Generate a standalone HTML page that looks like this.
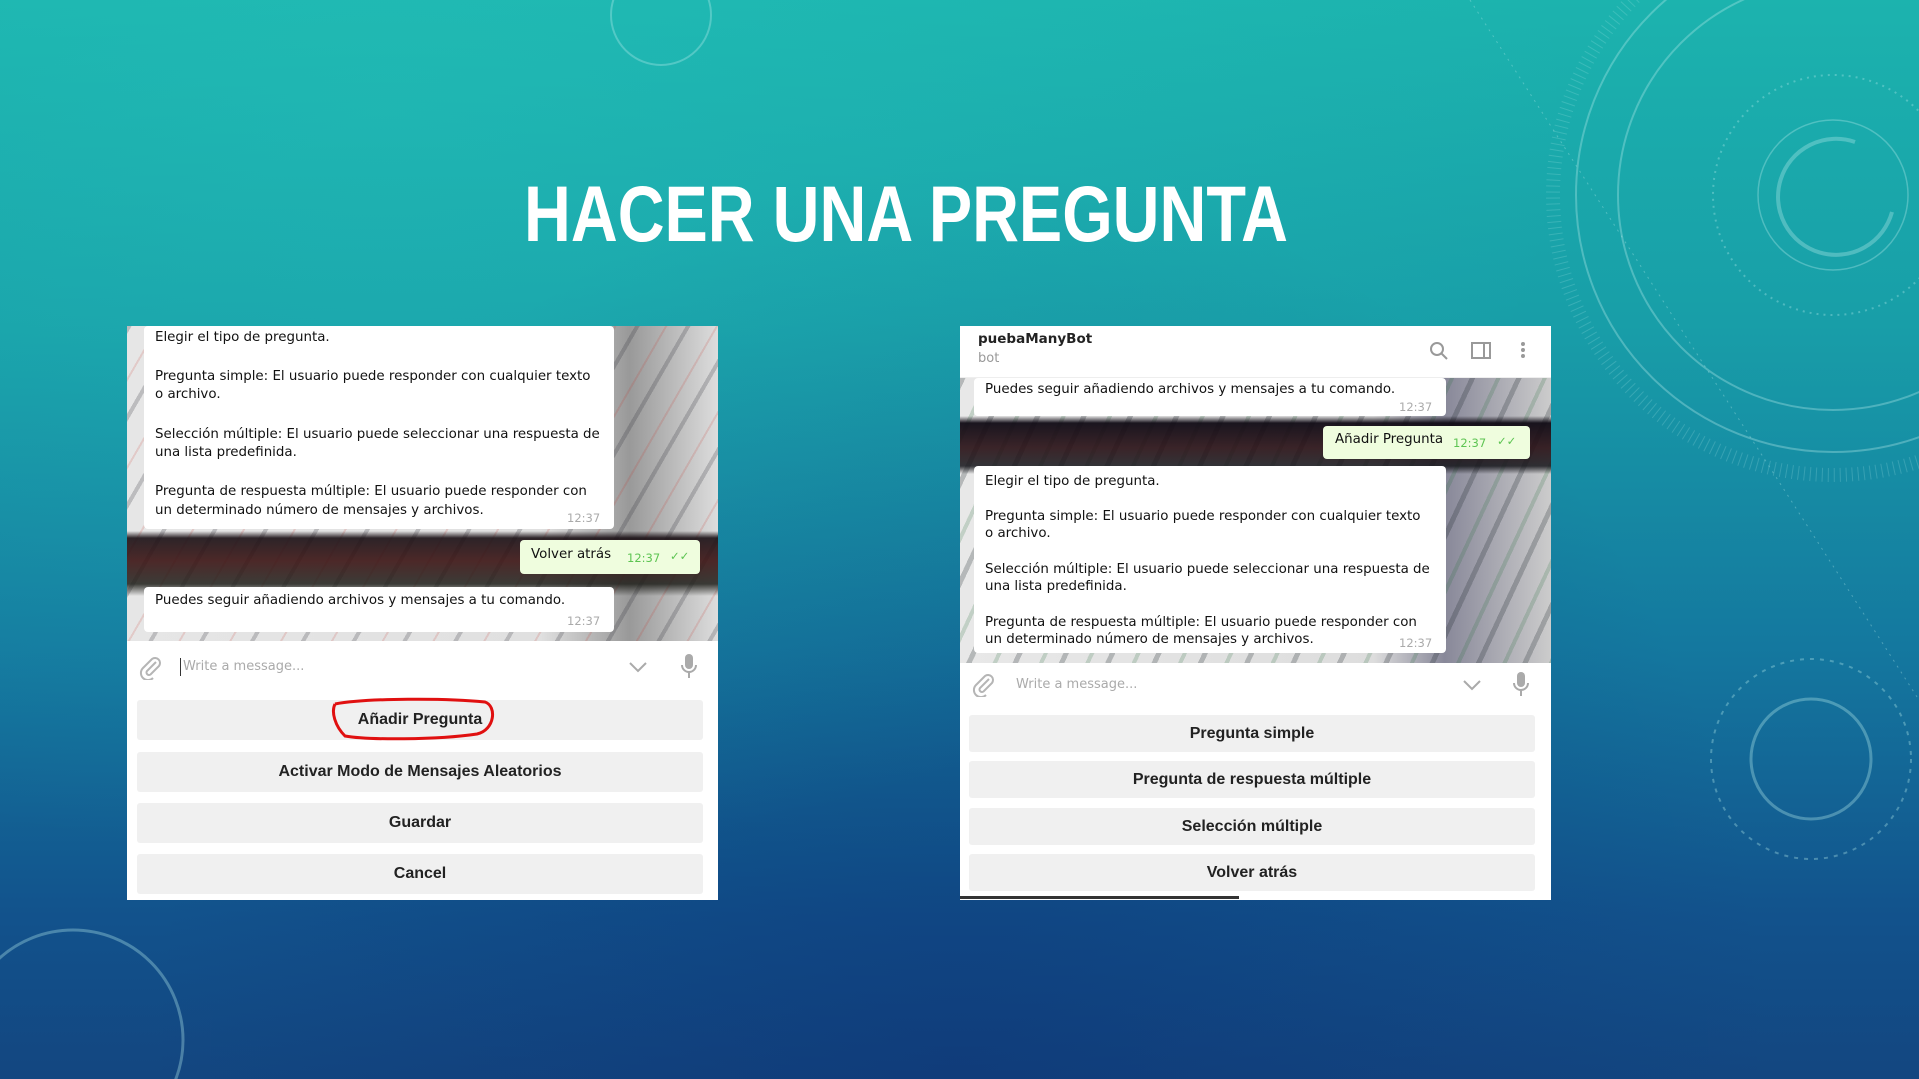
<!DOCTYPE html>
<html style="overflow:hidden"><head><meta charset="utf-8"><style>
*{margin:0;padding:0;box-sizing:border-box}
body{width:1919px;height:1079px;overflow:hidden;position:relative;font-family:"DejaVu Sans","Liberation Sans",sans-serif;
background:linear-gradient(180deg,#1cb3ae 0%,#189ea8 30%,#14789f 60%,#12528c 85%,#134680 100%);}
.bgov{position:absolute;inset:0;background:radial-gradient(ellipse at 20% 10%,rgba(40,200,190,.35),transparent 55%),radial-gradient(ellipse at 50% 100%,rgba(10,40,110,.35),transparent 60%)}
.panel{position:absolute;background:#fff;overflow:hidden}
.chat{position:absolute;left:0;right:0;overflow:hidden}
.bub{position:absolute;background:#fff;border-radius:4px;font-size:13.4px;color:#111;line-height:18px;}
.t{position:absolute;white-space:nowrap;font-size:13.4px;color:#111}
.tm{position:absolute;font-size:11.5px;color:#aaa;white-space:nowrap}
.sent{position:absolute;background:#effdde;border-radius:4px;font-size:13.4px;color:#111}
.sent .tm{color:#5dc452}
.btn{position:absolute;background:#f0f0f0;border-radius:3px;text-align:center;font-family:"Liberation Sans",sans-serif;font-size:16px;color:#222;font-weight:bold}
.ph{position:absolute;font-size:13px;color:#aaa}
</style></head><body>
<div class="bgov"></div>
<svg width="1919" height="1079" style="position:absolute;left:0;top:0" fill="none" stroke="rgba(180,235,235,.35)">
<circle cx="1833" cy="195" r="257" stroke-width="2"/>
<circle cx="1833" cy="195" r="215" stroke-width="2"/>
<circle cx="1833" cy="195" r="280" stroke-width="14" stroke-dasharray="1 5" opacity=".6"/>
<circle cx="1833" cy="195" r="120" stroke-dasharray="2 5" stroke-width="2"/>
<circle cx="1833" cy="195" r="75" stroke-width="1.5"/>
<path d="M1855 142 A58 58 0 1 0 1892 212" stroke-width="4"/>
<circle cx="661" cy="15" r="50" stroke-width="2"/>
<circle cx="73" cy="1040" r="110" stroke-width="3"/>
<circle cx="1811" cy="759" r="60" stroke-width="3"/>
<circle cx="1811" cy="759" r="100" stroke-width="2" stroke-dasharray="4 6"/>
<path d="M1470 0 L1919 700" stroke-dasharray="2 5"/>
</svg>
<svg width="1919" height="300" style="position:absolute;left:0;top:0">
<text x="524" y="241" textLength="764" lengthAdjust="spacingAndGlyphs" font-family="Liberation Sans, sans-serif" font-weight="bold" font-size="79" fill="#fff">HACER UNA PREGUNTA</text>
</svg>

<!-- LEFT PANEL -->
<div class="panel" style="left:127px;top:326px;width:591px;height:574px">
 <div class="chat" style="top:0;height:315px;background:
  linear-gradient(180deg,transparent 0,transparent 205px,rgba(25,15,20,.9) 212px,rgba(60,20,20,.9) 235px,rgba(30,30,25,.85) 258px,transparent 270px),
  repeating-linear-gradient(120deg,rgba(40,40,50,.22) 0 4px,transparent 4px 26px,rgba(200,40,30,.15) 26px 28px,transparent 28px 44px),
  linear-gradient(90deg,#e6e6e6,#e0e0e0 70%,#999 85%,#ddd)">
  <div class="bub" style="left:17px;top:0;width:470px;height:203px">
   <div class="t" style="left:11px;top:3px">Elegir el tipo de pregunta.</div>
   <div class="t" style="left:11px;top:42px">Pregunta simple: El usuario puede responder con cualquier texto</div>
   <div class="t" style="left:11px;top:60px">o archivo.</div>
   <div class="t" style="left:11px;top:100px">Selección múltiple: El usuario puede seleccionar una respuesta de</div>
   <div class="t" style="left:11px;top:118px">una lista predefinida.</div>
   <div class="t" style="left:11px;top:157px">Pregunta de respuesta múltiple: El usuario puede responder con</div>
   <div class="t" style="left:11px;top:176px">un determinado número de mensajes y archivos.</div>
   <div class="tm" style="left:423px;top:183px">12:37</div>
  </div>
  <div class="sent" style="left:393px;top:214px;width:180px;height:34px">
   <div class="t" style="left:11px;top:7px">Volver atrás</div>
   <div class="tm" style="left:107px;top:11px">12:37</div>
   <div class="tm" style="left:150px;top:9px">✓✓</div>
  </div>
  <div class="bub" style="left:17px;top:261px;width:470px;height:45px">
   <div class="t" style="left:11px;top:5px">Puedes seguir añadiendo archivos y mensajes a tu comando.</div>
   <div class="tm" style="left:423px;top:25px">12:37</div>
  </div>
 </div>
 <svg style="position:absolute;left:12px;top:330px" width="24" height="24" fill="none" stroke="#b5b5b5" stroke-width="2"><path d="M17 6 L8 15 a2.5 2.5 0 0 0 3.5 3.5 L20 10 a5 5 0 0 0 -7 -7 L4 12 a7 7 0 0 0 10 10"/></svg>
 <div style="position:absolute;left:53px;top:332px;width:1px;height:18px;background:#333"></div>
 <div class="ph" style="left:56px;top:333px">Write a message...</div>
 <svg style="position:absolute;left:501px;top:334px" width="20" height="14" fill="none" stroke="#aaa" stroke-width="2"><path d="M2 3 L10 11 L18 3"/></svg>
 <svg style="position:absolute;left:554px;top:328px" width="16" height="26" fill="#aaa"><rect x="4" y="0" width="8" height="15" rx="4"/><path d="M1 11 a7 7 0 0 0 14 0" fill="none" stroke="#aaa" stroke-width="2"/><rect x="7" y="18" width="2" height="6"/></svg>
 <div class="btn" style="left:10px;top:374px;width:566px;height:40px;line-height:40px">Añadir Pregunta</div>
 <div class="btn" style="left:10px;top:426px;width:566px;height:40px;line-height:40px">Activar Modo de Mensajes Aleatorios</div>
 <div class="btn" style="left:10px;top:477px;width:566px;height:40px;line-height:40px">Guardar</div>
 <div class="btn" style="left:10px;top:528px;width:566px;height:40px;line-height:40px">Cancel</div>
 <svg style="position:absolute;left:200px;top:370px" width="170" height="48" fill="none" stroke="#e01010" stroke-width="3"><path d="M8 8 C40 2 120 2 158 6 C170 10 168 34 150 38 C110 44 40 44 18 40 C8 30 4 16 8 8"/></svg>
</div>

<!-- RIGHT PANEL -->
<div class="panel" style="left:960px;top:326px;width:591px;height:574px">
 <div style="position:absolute;left:18px;top:5px;font-size:13.5px;font-weight:bold;color:#222">puebaManyBot</div>
 <div style="position:absolute;left:18px;top:25px;font-size:13px;color:#999">bot</div>
 <svg style="position:absolute;left:469px;top:15px" width="20" height="20" fill="none" stroke="#999" stroke-width="2"><circle cx="8" cy="8" r="6"/><path d="M12.5 12.5 L18 18"/></svg>
 <svg style="position:absolute;left:511px;top:16px" width="20" height="18" fill="none" stroke="#999" stroke-width="2"><rect x="1" y="1" width="18" height="15"/><path d="M13 1 V16"/></svg>
 <div style="position:absolute;left:561px;top:16px;width:4px;height:4px;border-radius:2px;background:#999;box-shadow:0 6px #999,0 12px #999"></div>
 <div class="chat" style="top:51px;height:286px;border-top:1px solid #eee;background:
  linear-gradient(180deg,transparent 0,transparent 38px,rgba(15,10,20,.95) 45px,rgba(40,15,20,.9) 70px,rgba(20,20,25,.85) 88px,transparent 96px),
  repeating-linear-gradient(115deg,rgba(30,40,45,.25) 0 5px,transparent 5px 24px,rgba(40,110,60,.2) 24px 28px,transparent 28px 42px),
  linear-gradient(90deg,#e8e8e8,#ddd 70%,#889 82%,#ccc)">
  <div class="bub" style="left:14px;top:0;width:472px;height:38px">
   <div class="t" style="left:11px;top:3px">Puedes seguir añadiendo archivos y mensajes a tu comando.</div>
   <div class="tm" style="left:425px;top:20px">12:37</div>
  </div>
  <div class="sent" style="left:363px;top:48px;width:207px;height:33px">
   <div class="t" style="left:12px;top:6px">Añadir Pregunta</div>
   <div class="tm" style="left:130px;top:10px">12:37</div>
   <div class="tm" style="left:174px;top:8px">✓✓</div>
  </div>
  <div class="bub" style="left:14px;top:88px;width:472px;height:187px">
   <div class="t" style="left:11px;top:7px">Elegir el tipo de pregunta.</div>
   <div class="t" style="left:11px;top:42px">Pregunta simple: El usuario puede responder con cualquier texto</div>
   <div class="t" style="left:11px;top:59px">o archivo.</div>
   <div class="t" style="left:11px;top:95px">Selección múltiple: El usuario puede seleccionar una respuesta de</div>
   <div class="t" style="left:11px;top:112px">una lista predefinida.</div>
   <div class="t" style="left:11px;top:148px">Pregunta de respuesta múltiple: El usuario puede responder con</div>
   <div class="t" style="left:11px;top:165px">un determinado número de mensajes y archivos.</div>
   <div class="tm" style="left:425px;top:168px">12:37</div>
  </div>
 </div>
 <svg style="position:absolute;left:12px;top:347px" width="24" height="24" fill="none" stroke="#b5b5b5" stroke-width="2"><path d="M17 6 L8 15 a2.5 2.5 0 0 0 3.5 3.5 L20 10 a5 5 0 0 0 -7 -7 L4 12 a7 7 0 0 0 10 10"/></svg>
 <div class="ph" style="left:56px;top:351px">Write a message...</div>
 <svg style="position:absolute;left:502px;top:352px" width="20" height="14" fill="none" stroke="#aaa" stroke-width="2"><path d="M2 3 L10 11 L18 3"/></svg>
 <svg style="position:absolute;left:553px;top:346px" width="16" height="26" fill="#aaa"><rect x="4" y="0" width="8" height="15" rx="4"/><path d="M1 11 a7 7 0 0 0 14 0" fill="none" stroke="#aaa" stroke-width="2"/><rect x="7" y="18" width="2" height="6"/></svg>
 <div class="btn" style="left:9px;top:389px;width:566px;height:37px;line-height:37px">Pregunta simple</div>
 <div class="btn" style="left:9px;top:435px;width:566px;height:37px;line-height:37px">Pregunta de respuesta múltiple</div>
 <div class="btn" style="left:9px;top:482px;width:566px;height:37px;line-height:37px">Selección múltiple</div>
 <div class="btn" style="left:9px;top:528px;width:566px;height:37px;line-height:37px">Volver atrás</div>
 <div style="position:absolute;left:0;top:570px;width:279px;height:3px;background:#333"></div>
</div>
</body></html>
